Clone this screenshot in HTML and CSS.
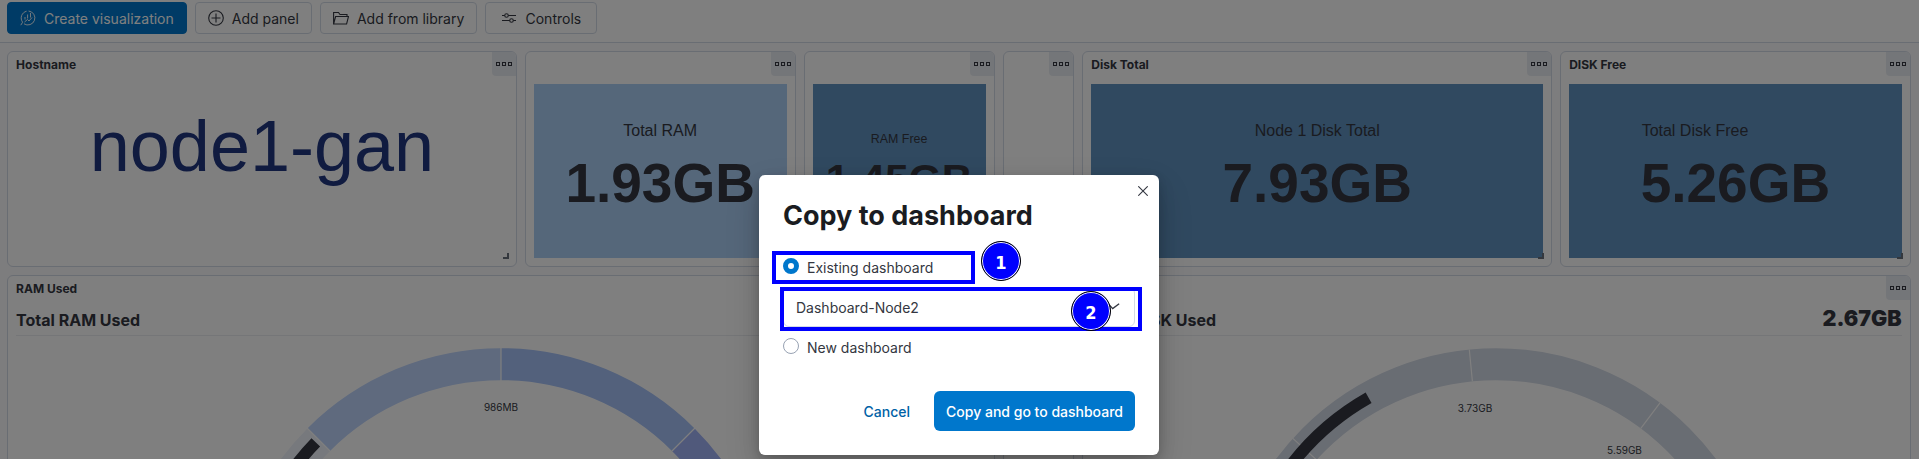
FILE: index.html
```html
<!DOCTYPE html>
<html lang="en">
<head>
<meta charset="utf-8">
<title>Dashboard</title>
<link rel="stylesheet" href="styles.css">
</head>
<body>
<div class="app">
  <header class="toolbar">
    <button class="btn btn--primary"><svg class="icon" viewBox="0 0 16 16"><path d="M6.600 1.200A7 7 0 0 0 2.600 12.200L.8 15.200M8.600 1A7 7 0 1 1 4 13.800M5 7v2.500M7.600 4.500v4M10.500 3v4.500M4.500 12l3-2.500 1.500 1.500 3-3.500"/></svg>Create visualization</button>
    <button class="btn"><svg class="icon" viewBox="0 0 16 16"><circle cx="8" cy="8" r="7.300"/><path d="M8 3.500v9M3.500 8h9"/></svg>Add panel</button>
    <button class="btn"><svg class="icon" viewBox="0 0 16 16"><path d="M.6 14V2.500h4.900l1.500 2h7v2M.6 14l2-7.500h12.900L13.600 14z"/></svg>Add from library</button>
    <button class="btn btn--wide"><svg class="icon" viewBox="0 0 16 16"><circle cx="5.500" cy="5.500" r="1.800"/><circle cx="10.500" cy="10.500" r="1.800"/><path d="M1 5.500h2.700M7.300 5.500H15M1 10.500h7.700M12.300 10.500H15"/></svg>Controls</button>
  </header>
  <main class="grid">
    <section class="panel span13"><h2 class="panel-title">Hostname</h2><span class="opts"><i></i><i></i><i></i></span>
      <div class="tile tile--plain"><span class="host">node1-gan</span></div><span class="resize"></span></section>
    <section class="panel span7"><h2 class="panel-title"></h2><span class="opts"><i></i><i></i><i></i></span>
      <div class="tile tile--light"><div class="metric"><span class="label">Total RAM</span><b class="value">1.93GB</b></div></div><span class="resize"></span></section>
    <section class="panel span5"><h2 class="panel-title"></h2><span class="opts"><i></i><i></i><i></i></span>
      <div class="tile"><div class="metric metric--small"><span class="label">RAM Free</span><b class="value">1.45GB</b></div></div><span class="resize"></span></section>
    <section class="panel span2"><h2 class="panel-title"></h2><span class="opts"><i></i><i></i><i></i></span><span class="resize"></span></section>
    <section class="panel span12"><h2 class="panel-title">Disk Total</h2><span class="opts"><i></i><i></i><i></i></span>
      <div class="tile"><div class="metric"><span class="label">Node 1 Disk Total</span><b class="value">7.93GB</b></div></div><span class="resize"></span></section>
    <section class="panel span9"><h2 class="panel-title">DISK Free</h2><span class="opts"><i></i><i></i><i></i></span>
      <div class="tile"><div class="metric metric--left"><span class="label">Total Disk Free</span><b class="value">5.26GB</b></div></div><span class="resize"></span></section>

    <section class="panel span25"><h2 class="panel-title">RAM Used</h2><span class="opts"><i></i><i></i><i></i></span>
      <div class="gauge-head"><span>Total RAM Used</span></div>
      <svg class="gauge" viewBox="-485 -286 970 200" width="970" height="200">
        <g class="arc">
          <path class="c0" d="M-257.800 0A257.800 257.800 0 0 1 -182.300 -182.300"/>
          <path class="c1" d="M-182.300 -182.300A257.800 257.800 0 0 1 0 -257.800"/>
          <path class="c2" d="M0 -257.800A257.800 257.800 0 0 1 182.300 -182.300"/>
          <path class="c3" d="M182.300 -182.300A257.800 257.800 0 0 1 257.800 0"/>
        </g>
        <path class="sep" d="M-194 -194L-171 -171M0 -274V-241M194 -194L171 -171"/>
        <path class="bar" d="M-258 0A258 258 0 0 1 -185.200 -179.600"/>
        <text x="0" y="-211.300">986MB</text>
      </svg></section>
    <section class="panel span2"></section>
    <section class="panel span21"><h2 class="panel-title">DISK Used</h2><span class="opts"><i></i><i></i><i></i></span>
      <div class="gauge-head"><span>Total DISK Used</span><b>2.67GB</b></div>
      <svg class="gauge" viewBox="-405 -286 810 200" width="810" height="200">
        <g class="arc"><path class="c4" d="M-257.800 0A257.800 257.800 0 0 1 257.800 0"/></g>
        <path class="sep" d="M-203.200 -183.600L-179.400 -162.100M-26.700 -272.500L-23.600 -240.700M164 -219.200L144.800 -193.600"/>
        <path class="bar" d="M-258 0A258 258 0 0 1 -127.400 -224.300"/>
        <text x="-21" y="-210.300">3.73GB</text>
        <text x="128.500" y="-168.300">5.59GB</text>
      </svg></section>
  </main>
</div>

<div class="overlay">
  <div class="modal" role="dialog">
    <svg class="close" viewBox="0 0 10 10"><path d="M.3 .3l9.400 9.400M9.700 .3L.3 9.700"/></svg>
    <h1 class="modal-title">Copy to dashboard</h1>
    <label class="option"><span class="radio radio--on"></span>Existing dashboard</label>
    <div class="select">Dashboard-Node2<svg class="chevron" viewBox="0 0 14 8"><path d="M1 1.500L5.500 6.500L13 .8"/></svg></div>
    <label class="option"><span class="radio"></span>New dashboard</label>
    <div class="actions"><a class="cancel">Cancel</a><button class="confirm">Copy and go to dashboard</button></div>
    <div class="mark mark--option"></div>
    <div class="mark mark--select"></div>
    <span class="step step--one">1</span>
    <span class="step step--two">2</span>
  </div>
</div>
</body>
</html>
```
FILE: styles.css
```css
* { box-sizing: border-box; }
body {
  margin: 0;
  height: 459px;
  overflow: hidden;
  background: #fafbfd;
  color: #343741;
  font-family: Inter, "Liberation Sans", sans-serif;
  font-size: 14px;
}
.app { height: 459px; overflow: hidden; }
.toolbar {
  display: flex;
  gap: 8px;
  height: 43px;
  padding: 2px 7px 0;
  background: #fff;
  border-bottom: 1px solid #d3dae6;
}
.btn {
  display: flex;
  align-items: center;
  gap: 8px;
  height: 32px;
  padding: 1px 12px 0;
  border: 1px solid #d3dae6;
  border-radius: 4px;
  background: #fff;
  color: #343741;
  font: 400 14px Inter, sans-serif;
}
.btn--primary { background: #07c; border-color: #07c; color: #fff; }
.btn--wide { justify-content: center; width: 112px; }
.icon { width: 16px; height: 16px; margin-top: -2px; fill: none; stroke: currentColor; stroke-width: 1.1; }
.btn--primary .icon { stroke-width: .9; }
.grid {
  display: grid;
  grid-template-columns: repeat(48, minmax(0, 1fr));
  grid-template-rows: 216px 216px;
  gap: 8px;
  padding: 8px 8.4px 8px 7.1px;
}
.panel {
  position: relative;
  display: flex;
  flex-direction: column;
  padding: 0 8px 8px;
  border: 1px solid #d3dae6;
  border-radius: 6px;
  background: #fff;
  overflow: hidden;
}
.span2 { grid-column: span 2; }
.span5 { grid-column: span 5; }
.span7 { grid-column: span 7; }
.span9 { grid-column: span 9; }
.span12 { grid-column: span 12; }
.span13 { grid-column: span 13; }
.span21 { grid-column: span 21; }
.span25 { grid-column: span 25; }
.panel-title { flex: none; height: 32px; margin: 0; font-size: 12px; font-weight: 700; line-height: 26px; color: #343741; }
.opts {
  position: absolute;
  top: 0;
  right: 0;
  display: flex;
  justify-content: center;
  gap: 2px;
  width: 24px;
  height: 24px;
  padding-top: 10px;
  border-bottom-left-radius: 4px;
  background: #e9edf3;
}
.opts i { width: 4px; height: 4px; border: 1px solid #343741; }
.resize { position: absolute; right: 7px; bottom: 7px; width: 6px; height: 6px; border: solid #69707d; border-width: 0 2px 2px 0; }
.tile {
  display: flex;
  justify-content: center;
  flex: 1;
  background: #6092c0;
  color: #343741;
  font-family: "Liberation Sans", Arial, sans-serif;
}
.tile--plain { background: none; }
.tile--light { background: #aacef4; }
.host { margin-top: 22px; font-size: 72px; line-height: 80px; color: #203680; }
.metric { display: flex; flex-direction: column; align-items: center; padding-top: 37px; }
.label { font-size: 16px; line-height: 20px; }
.value { font-size: 55px; line-height: 64px; margin-top: 10px; white-space: nowrap; }
.metric--left { align-items: flex-start; }
.metric--left .label { padding-left: 1px; }
.metric--small { padding-top: 46px; }
.metric--small .label { font-size: 12.400px; line-height: 18px; }
.metric--small .value { font-size: 42.600px; line-height: 50px; margin-top: 6px; }
.gauge-head {
  flex: none;
  display: flex;
  justify-content: space-between;
  align-items: baseline;
  height: 28px;
  line-height: 24px;
  border-bottom: 1px solid #eaecf0;
  font-size: 16px;
  font-weight: 700;
}
.gauge-head b { font-size: 21.500px; line-height: 20px; }
.gauge { flex: none; align-self: center; }
.gauge text { font: 10px Inter, sans-serif; fill: #343741; text-anchor: middle; }
.arc { fill: none; stroke-width: 32; }
.c0 { stroke: #eef2fa; }
.c1 { stroke: #bed4fc; }
.c2 { stroke: #a6c2f8; }
.c3 { stroke: #a0b2f6; }
.c4 { stroke: #d3dae6; }
.sep { stroke: #fff; stroke-width: 1.200; }
.bar { fill: none; stroke: #343741; stroke-width: 12; }

.overlay {
  position: absolute;
  inset: 0;
  display: flex;
  justify-content: center;
  align-items: flex-start;
  padding: 175px 1px 0 0;
  background: rgba(0, 0, 0, .5);
}
.modal {
  position: relative;
  display: flex;
  flex-direction: column;
  width: 400px;
  height: 280px;
  padding: 25px 24px 24px;
  border-radius: 6px;
  background: #fff;
  box-shadow: 0 3px 9px rgba(0, 0, 0, .12), 0 8px 18px rgba(0, 0, 0, .1), 0 15px 35px rgba(0, 0, 0, .16);
}
.close { position: absolute; top: 11px; right: 11px; width: 10px; height: 10px; stroke: #343741; stroke-width: 1.100; }
.modal-title { margin: 0; font-size: 27px; line-height: 32px; font-weight: 700; color: #1a1c21; }
.option { display: flex; align-items: center; gap: 8px; height: 24px; }
.modal-title + .option { margin-top: 23px; }
.radio { width: 16px; height: 16px; margin-top: -2px; border: 1px solid #98a2b3; border-radius: 50%; background: #fff; }
.radio--on { border: 5px solid #07c; }
.select {
  display: flex;
  align-items: center;
  justify-content: space-between;
  width: 352px;
  height: 40px;
  margin: 8px 0;
  padding: 0 14px 0 12px;
  border: 1px solid #d3dae6;
  border-radius: 6px;
}
.chevron { width: 12px; height: 7px; margin-top: -2px; fill: none; stroke: #343741; stroke-width: 1.600; }
.actions { display: flex; align-items: center; justify-content: flex-end; gap: 24px; margin-top: auto; }
.cancel { color: #0061a6; font-weight: 500; }
.confirm { height: 40px; width: 201px; padding: 0; border: 0; border-radius: 6px; background: #07c; color: #fff; font: 500 14px Inter, sans-serif; }
.mark { position: absolute; border: 4px solid #00f; }
.mark--option { left: 13px; top: 76px; width: 203px; height: 33px; }
.mark--select { left: 21px; top: 112px; width: 362px; height: 44px; }
.step {
  position: absolute;
  width: 40px;
  height: 40px;
  border: 1px solid #000;
  border-radius: 50%;
  background: #00f;
  box-shadow: inset 0 0 0 1px #fff;
  color: #fff;
  font: 700 18px/41px "DejaVu Sans Condensed", "DejaVu Sans", sans-serif;
  text-align: center;
}
.step--one { left: 222px; top: 66px; }
.step--two { left: 312px; top: 116px; }
```
